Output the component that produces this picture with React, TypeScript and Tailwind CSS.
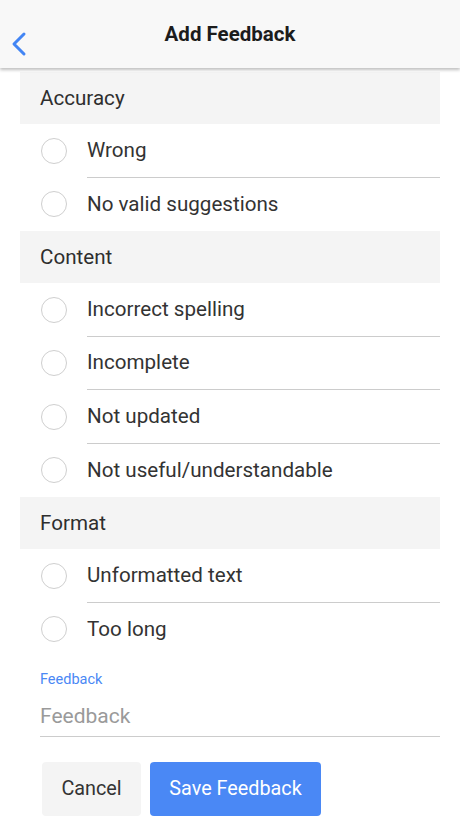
import { useState } from "react";

type Section = {
  title: string;
  items: string[];
};

const sections: Section[] = [
  { title: "Accuracy", items: ["Wrong", "No valid suggestions"] },
  {
    title: "Content",
    items: [
      "Incorrect spelling",
      "Incomplete",
      "Not updated",
      "Not useful/understandable",
    ],
  },
  { title: "Format", items: ["Unformatted text", "Too long"] },
];

const Option = ({
  label,
  last,
  checked,
  onSelect,
}: {
  label: string;
  last: boolean;
  checked: boolean;
  onSelect: () => void;
}) => (
  <div className="flex h-[53.5px] items-stretch cursor-pointer" onClick={onSelect}>
    <div className="flex items-center pl-[21px] pr-[20px]">
      <div
        className={
          checked
            ? "w-[26px] h-[26px] rounded-full border-[7px] border-[#4285f4]"
            : "w-[26px] h-[26px] rounded-full border border-[#cfcfcf]"
        }
      />
    </div>
    <div
      className={
        last
          ? "flex-1 flex items-center text-[20.6px] text-[#333]"
          : "flex-1 flex items-center text-[20.6px] text-[#333] border-b border-[#cccccc]"
      }
    >
      {label}
    </div>
  </div>
);

export default function App() {
  const [selected, setSelected] = useState<string | null>(null);

  return (
    <div className="w-[460px] h-[818px] bg-white overflow-hidden font-['Roboto',sans-serif]">
      <div className="relative h-[68px] bg-[#f8f8f8] flex items-center justify-center shadow-[0_2px_3px_rgba(0,0,0,0.25)] z-10">
        <button className="absolute left-[9px] top-[31px] text-[#4285f4]">
          <svg width="20" height="26" viewBox="0 0 20 26" fill="none">
            <path d="M15 3 L5 13 L15 23" stroke="currentColor" strokeWidth="3" strokeLinecap="round" strokeLinejoin="round" />
          </svg>
        </button>
        <h1 className="text-[20.5px] font-bold text-[#1c1c1c] pt-[1px]">Add Feedback</h1>
      </div>

      <div className="mx-[20px] pt-[4px]">
        {sections.map((section) => (
          <div key={section.title}>
            <div className="h-[52px] bg-[#f4f4f4] flex items-center px-[20px] text-[20.6px] text-[#2e2e2e]">
              {section.title}
            </div>
            {section.items.map((item, i) => (
              <Option
                key={item}
                label={item}
                last={i === section.items.length - 1}
                checked={selected === item}
                onSelect={() => setSelected(item)}
              />
            ))}
          </div>
        ))}

        <div className="mt-[16px] pl-[20px]">
          <label className="block text-[14.5px] leading-[16px] text-[#4a88f5]">Feedback</label>
          <input
            placeholder="Feedback"
            className="w-full h-[49px] pt-[8px] border-b border-[#cccccc] text-[21px] text-[#333] placeholder:text-[#9a9a9a] outline-none bg-transparent"
          />
        </div>

        <div className="mt-[25px] pl-[22px] flex gap-[9px]">
          <button className="w-[99px] h-[54px] rounded-[4px] bg-[#f4f4f4] text-[19.8px] text-[#333]">
            Cancel
          </button>
          <button className="w-[171px] h-[54px] rounded-[4px] bg-[#4a88f5] text-[19.8px] text-white">
            Save Feedback
          </button>
        </div>
      </div>
    </div>
  );
}
